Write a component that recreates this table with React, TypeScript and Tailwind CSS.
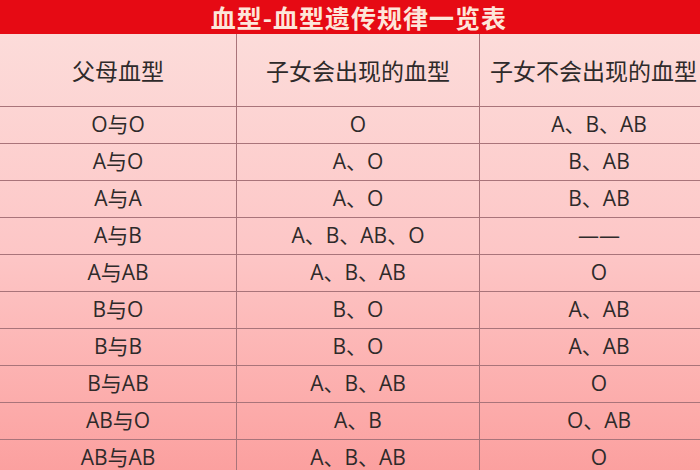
import * as React from "react";

const rows: [string, string, string][] = [
  ["O与O", "O", "A、B、AB"],
  ["A与O", "A、O", "B、AB"],
  ["A与A", "A、O", "B、AB"],
  ["A与B", "A、B、AB、O", "——"],
  ["A与AB", "A、B、AB", "O"],
  ["B与O", "B、O", "A、AB"],
  ["B与B", "B、O", "A、AB"],
  ["B与AB", "A、B、AB", "O"],
  ["AB与O", "A、B", "O、AB"],
  ["AB与AB", "A、B、AB", "O"],
];

const cjk = "font-['Noto_Sans_CJK_SC',sans-serif]";
const latin = "font-['Open_Sans','Noto_Sans_CJK_SC',sans-serif]";

export default function App() {
  return (
    <div className="h-[470px] w-[700px] overflow-hidden bg-[#fb9f9e]">
      <div
        className={`h-[34px] w-[718px] bg-[#e60a14] text-center text-[25px] font-bold leading-[34px] tracking-[1px] text-[#fde6da] ${cjk}`}
      >
        血型-血型遗传规律一览表
      </div>

      <div className="w-[718px] bg-linear-to-b from-[#fcdcda] via-[#fdc6c6] to-[#fb9f9e]">
        <div
          className={`grid h-[72px] grid-cols-[237px_243px_238px] whitespace-nowrap text-[23px] text-[#2e2a2a] ${cjk}`}
        >
          <div className="flex items-center justify-center border-r border-[#a9747a]">
            父母血型
          </div>
          <div className="flex items-center justify-center border-r border-[#a9747a]">
            子女会出现的血型
          </div>
          <div className="flex items-center justify-start pl-[10px]">
            子女不会出现的血型
          </div>
        </div>

        {rows.map(([parents, yes, no]) => (
          <div
            key={parents}
            className={`grid h-[37px] grid-cols-[237px_243px_238px] border-t border-[#a9747a] text-[21px] text-[#2e2a2a] ${latin}`}
          >
            <div className="flex items-center justify-center border-r border-[#a9747a]">
              {parents}
            </div>
            <div className="flex items-center justify-center border-r border-[#a9747a]">
              {yes}
            </div>
            <div className="flex items-center justify-center">{no}</div>
          </div>
        ))}
      </div>
    </div>
  );
}
